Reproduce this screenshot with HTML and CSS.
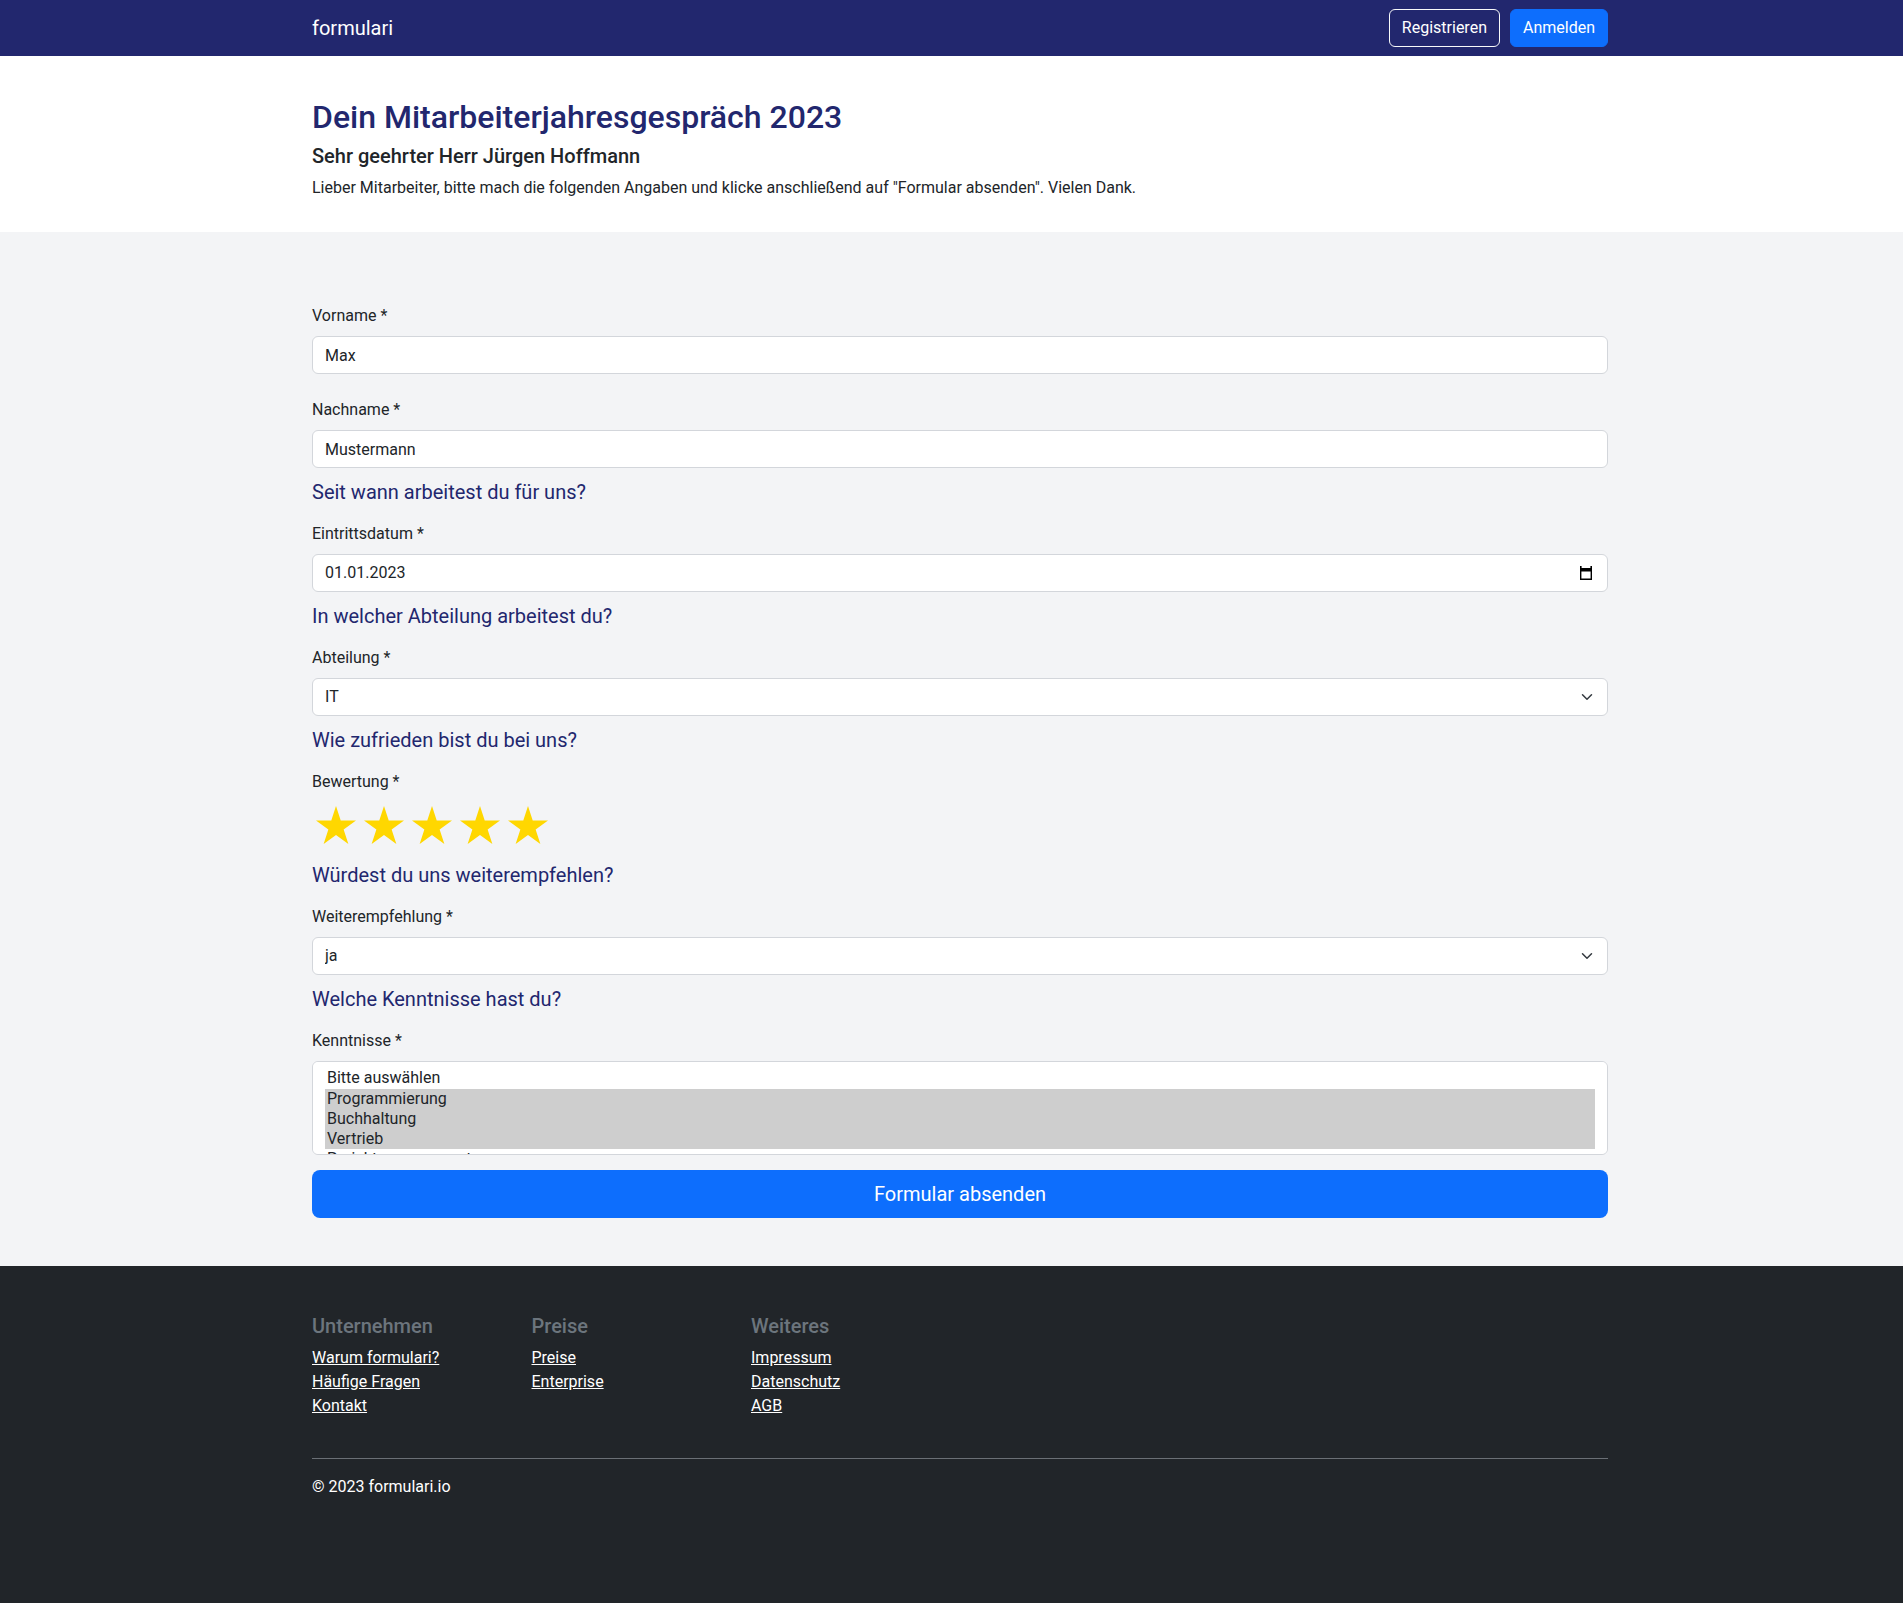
FILE: index.html
```html
<!DOCTYPE html>
<html lang="de">
<head>
<meta charset="utf-8">
<title>Dein Mitarbeiterjahresgespräch 2023 – formulari</title>
<link rel="stylesheet" href="styles.css">
</head>
<body>
<div class="page">
  <nav class="navbar">
    <div class="container nav-inner">
      <a class="brand" href="#">formulari</a>
      <div class="nav-actions">
        <a class="btn btn-outline" href="#">Registrieren</a>
        <a class="btn btn-primary" href="#">Anmelden</a>
      </div>
    </div>
  </nav>

  <header class="intro">
    <div class="container">
      <h1 class="title">Dein Mitarbeiterjahresgespräch 2023</h1>
      <h2 class="greeting">Sehr geehrter Herr Jürgen Hoffmann</h2>
      <p class="intro-text">Lieber Mitarbeiter, bitte mach die folgenden Angaben und klicke anschließend auf "Formular absenden". Vielen Dank.</p>
    </div>
  </header>

  <main class="form-area">
    <div class="container">
      <form class="form" onsubmit="return false">
        <div class="field">
          <label class="label" for="vorname">Vorname *</label>
          <input class="control" id="vorname" type="text" value="Max">
        </div>
        <div class="field">
          <label class="label" for="nachname">Nachname *</label>
          <input class="control" id="nachname" type="text" value="Mustermann">
        </div>

        <h3 class="section-title">Seit wann arbeitest du für uns?</h3>
        <div class="field">
          <label class="label" for="datum">Eintrittsdatum *</label>
          <div class="control date-control">
            <input class="date-input" id="datum" type="text" value="01.01.2023">
            <svg class="cal-icon" width="14" height="14" viewBox="0 0 14 14" aria-hidden="true">
              <rect x="1" y="0" width="1.6" height="2.4" fill="#000"/>
              <rect x="11.4" y="0" width="1.6" height="2.4" fill="#000"/>
              <path fill="#000" fill-rule="evenodd" d="M1 2h12v12H1z M2.4 5.6h9.2v7H2.4z"/>
            </svg>
          </div>
        </div>

        <h3 class="section-title">In welcher Abteilung arbeitest du?</h3>
        <div class="field">
          <label class="label" for="abteilung">Abteilung *</label>
          <div class="select-wrap">
            <select class="control select" id="abteilung">
              <option>Bitte auswählen</option>
              <option selected>IT</option>
              <option>Buchhaltung</option>
              <option>Vertrieb</option>
            </select>
            <svg class="chevron" width="16" height="12" viewBox="0 0 16 16" aria-hidden="true"><path fill="none" stroke="#343a40" stroke-linecap="round" stroke-linejoin="round" stroke-width="2" d="m2 5 6 6 6-6"/></svg>
          </div>
        </div>

        <h3 class="section-title">Wie zufrieden bist du bei uns?</h3>
        <div class="field">
          <span class="label">Bewertung *</span>
          <div class="stars">
            <svg class="star" width="48" height="46" viewBox="0 0 48 46"><path fill="#ffd700" d="M24 4 L28.72 18.53 L44 18.53 L31.64 27.51 L36.36 42.04 L24 33.06 L11.64 42.04 L16.36 27.51 L4 18.53 L19.28 18.53 Z"/></svg>
            <svg class="star" width="48" height="46" viewBox="0 0 48 46"><path fill="#ffd700" d="M24 4 L28.72 18.53 L44 18.53 L31.64 27.51 L36.36 42.04 L24 33.06 L11.64 42.04 L16.36 27.51 L4 18.53 L19.28 18.53 Z"/></svg>
            <svg class="star" width="48" height="46" viewBox="0 0 48 46"><path fill="#ffd700" d="M24 4 L28.72 18.53 L44 18.53 L31.64 27.51 L36.36 42.04 L24 33.06 L11.64 42.04 L16.36 27.51 L4 18.53 L19.28 18.53 Z"/></svg>
            <svg class="star" width="48" height="46" viewBox="0 0 48 46"><path fill="#ffd700" d="M24 4 L28.72 18.53 L44 18.53 L31.64 27.51 L36.36 42.04 L24 33.06 L11.64 42.04 L16.36 27.51 L4 18.53 L19.28 18.53 Z"/></svg>
            <svg class="star" width="48" height="46" viewBox="0 0 48 46"><path fill="#ffd700" d="M24 4 L28.72 18.53 L44 18.53 L31.64 27.51 L36.36 42.04 L24 33.06 L11.64 42.04 L16.36 27.51 L4 18.53 L19.28 18.53 Z"/></svg>
          </div>
        </div>

        <h3 class="section-title">Würdest du uns weiterempfehlen?</h3>
        <div class="field">
          <label class="label" for="empfehlung">Weiterempfehlung *</label>
          <div class="select-wrap">
            <select class="control select" id="empfehlung">
              <option>Bitte auswählen</option>
              <option selected>ja</option>
              <option>nein</option>
            </select>
            <svg class="chevron" width="16" height="12" viewBox="0 0 16 16" aria-hidden="true"><path fill="none" stroke="#343a40" stroke-linecap="round" stroke-linejoin="round" stroke-width="2" d="m2 5 6 6 6-6"/></svg>
          </div>
        </div>

        <h3 class="section-title">Welche Kenntnisse hast du?</h3>
        <div class="field">
          <label class="label" for="kenntnisse">Kenntnisse *</label>
          <select class="control multi" id="kenntnisse" multiple>
            <option>Bitte auswählen</option>
            <option selected>Programmierung</option>
            <option selected>Buchhaltung</option>
            <option selected>Vertrieb</option>
            <option>Projektmanagement</option>
            <option>Marketing</option>
          </select>
        </div>

        <button class="submit" type="submit">Formular absenden</button>
      </form>
    </div>
  </main>

  <footer class="footer">
    <div class="container">
      <div class="footer-cols">
        <div class="footer-col">
          <h5 class="footer-title">Unternehmen</h5>
          <ul class="footer-links">
            <li><a href="#">Warum formulari?</a></li>
            <li><a href="#">Häufige Fragen</a></li>
            <li><a href="#">Kontakt</a></li>
          </ul>
        </div>
        <div class="footer-col">
          <h5 class="footer-title">Preise</h5>
          <ul class="footer-links">
            <li><a href="#">Preise</a></li>
            <li><a href="#">Enterprise</a></li>
          </ul>
        </div>
        <div class="footer-col">
          <h5 class="footer-title">Weiteres</h5>
          <ul class="footer-links">
            <li><a href="#">Impressum</a></li>
            <li><a href="#">Datenschutz</a></li>
            <li><a href="#">AGB</a></li>
          </ul>
        </div>
      </div>
      <hr class="footer-rule">
      <p class="copyright">© 2023 formulari.io</p>
    </div>
  </footer>
</div>
</body>
</html>
```

FILE: styles.css
```css
html {
  overflow-x: hidden;
}

body {
  margin: 0;
  width: 1920px;
  font-family: Roboto, "Noto Sans", "Liberation Sans", sans-serif;
  font-size: 16px;
  line-height: 1.5;
  color: #212529;
  background: #212529;
}

.page {
  min-height: 100vh;
  display: flex;
  flex-direction: column;
}

.container {
  width: 1296px;
  margin: 0 auto;
}

/* Navbar */
.navbar {
  background: #22276e;
}

.nav-inner {
  height: 56px;
  display: flex;
  align-items: center;
  justify-content: space-between;
}

.brand {
  font-size: 20px;
  line-height: 30px;
  color: #fff;
  text-decoration: none;
}

.nav-actions {
  display: flex;
  gap: 10px;
}

.btn {
  display: inline-block;
  font-size: 16px;
  line-height: 24px;
  padding: 6px 12px;
  border: 1px solid transparent;
  border-radius: 6px;
  text-decoration: none;
  color: #fff;
}

.btn-outline {
  border-color: #f8f9fa;
}

.btn-primary {
  background: #0d6efd;
  border-color: #0d6efd;
}

/* Intro */
.intro {
  background: #fff;
  padding: 42px 0 32px;
}

.title {
  margin: 0 0 8px;
  font-size: 32px;
  font-weight: 500;
  line-height: 1.2;
  color: #22276e;
}

.greeting {
  margin: 0 0 8px;
  font-size: 20px;
  font-weight: 500;
  line-height: 1.2;
  color: #212529;
}

.intro-text {
  margin: 0;
}

/* Form */
.form-area {
  background: #f3f4f6;
  padding: 72px 0 48px;
}

.form {
  display: flex;
  flex-direction: column;
}

.field + .field {
  margin-top: 24px;
}

.label {
  display: block;
  margin-bottom: 8px;
  font-size: 16px;
  line-height: 24px;
}

.control {
  display: block;
  width: 100%;
  box-sizing: border-box;
  height: 38px;
  padding: 6px 12px;
  font-family: inherit;
  font-size: 16px;
  line-height: 24px;
  color: #212529;
  background: #fff;
  border: 1px solid #d3d6db;
  border-radius: 6px;
  outline: none;
}

.date-control {
  display: flex;
  align-items: center;
  padding-right: 14px;
}

.date-input {
  flex: 1;
  min-width: 0;
  border: 0;
  padding: 0;
  margin: 0;
  font: inherit;
  color: inherit;
  background: transparent;
  outline: none;
}

.cal-icon {
  flex: none;
  display: block;
}

.select-wrap {
  position: relative;
}

.select {
  appearance: none;
  -webkit-appearance: none;
  padding-right: 36px;
}

.chevron {
  position: absolute;
  right: 13px;
  top: 13px;
  pointer-events: none;
}

.section-title {
  margin: 12px 0 18px;
  font-size: 20px;
  font-weight: 400;
  line-height: 24px;
  color: #22276e;
}

.stars {
  display: flex;
  align-items: flex-start;
  height: 49px;
}

.star {
  display: block;
}

.multi {
  height: 94px;
  padding: 6px 12px 0;
  overflow-y: auto;
  scrollbar-width: none;
}

.multi option {
  color: #212529;
}

.submit {
  margin-top: 15px;
  width: 100%;
  height: 48px;
  border: 0;
  border-radius: 8px;
  background: #0d6efd;
  color: #fff;
  font-family: inherit;
  font-size: 20px;
  line-height: 30px;
  cursor: pointer;
}

/* Footer */
.footer {
  flex: 1;
  background: #212529;
  color: #fff;
  padding: 48px 0;
}

.footer-cols {
  display: grid;
  grid-template-columns: repeat(3, 219.5px);
}

.footer-title {
  margin: 0 0 8px;
  font-size: 20px;
  font-weight: 500;
  line-height: 1.2;
  color: #6c757d;
}

.footer-links {
  list-style: none;
  margin: 0;
  padding: 0;
}

.footer-links li {
  line-height: 24px;
}

.footer-links a {
  color: #fff;
  text-decoration: underline;
}

.footer-rule {
  margin: 40px 0 16px;
  border: 0;
  border-top: 1px solid #6a6f75;
}

.copyright {
  margin: 0;
}
```
